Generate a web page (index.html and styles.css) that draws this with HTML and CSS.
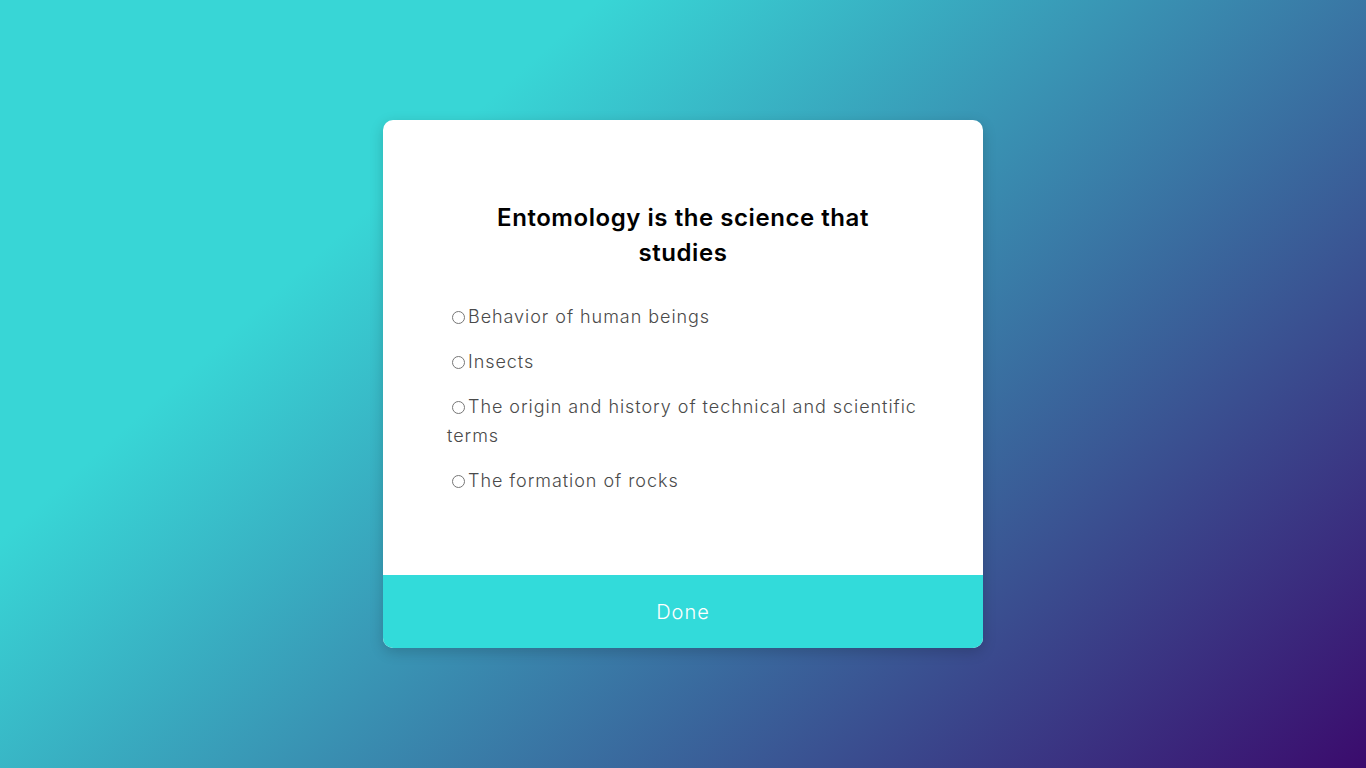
FILE: index.html
```html
<!DOCTYPE html>
<html lang="en">
<head>
<meta charset="utf-8">
<title>Quiz</title>
<link rel="stylesheet" href="styles.css">
</head>
<body>
  <main class="quiz-card">
    <section class="quiz-body">
      <h2 class="question">Entomology is the science that studies</h2>
      <ul class="answers">
        <li class="answer"><label><input type="radio" name="answer">Behavior of human beings</label></li>
        <li class="answer"><label><input type="radio" name="answer">Insects</label></li>
        <li class="answer"><label><input type="radio" name="answer">The origin and history of technical and scientific terms</label></li>
        <li class="answer"><label><input type="radio" name="answer">The formation of rocks</label></li>
      </ul>
    </section>
    <button class="done-btn" type="button">Done</button>
  </main>
</body>
</html>
```
FILE: styles.css
```css
* { box-sizing: border-box; }

html, body { height: 100%; }

body {
  margin: 0;
  min-height: 100vh;
  display: flex;
  align-items: center;
  justify-content: center;
  font-family: Inter, "Open Sans", sans-serif;
  background: linear-gradient(138deg, #38d6d6 27%, #3b0b6d 100%);
}

.quiz-card {
  width: 600px;
  height: 528px;
  background: #fff;
  border-radius: 10px;
  overflow: hidden;
  display: flex;
  flex-direction: column;
  box-shadow: 0 4px 14px rgba(0, 0, 0, 0.18);
}

.quiz-body {
  flex: 1;
  padding: 80px 64px 0;
}

.question {
  margin: 0 auto 32px;
  max-width: 400px;
  text-align: center;
  font-size: 24px;
  line-height: 35px;
  font-weight: 600;
  letter-spacing: 0.55px;
  color: #000;
}

.answers {
  list-style: none;
  margin: 0;
  padding: 0;
  display: flex;
  flex-direction: column;
  gap: 16px;
}

.answer {
  font-size: 18px;
  line-height: 29px;
  font-weight: 300;
  letter-spacing: 0.95px;
  color: #4a4a4a;
}

.answer input {
  margin: 3px 3px 0 5px;
  vertical-align: -1px;
}

.done-btn {
  height: 73px;
  border: none;
  background: #32dbda;
  color: #fff;
  font-family: inherit;
  font-size: 20px;
  font-weight: 300;
  letter-spacing: 1px;
  cursor: pointer;
}
```
